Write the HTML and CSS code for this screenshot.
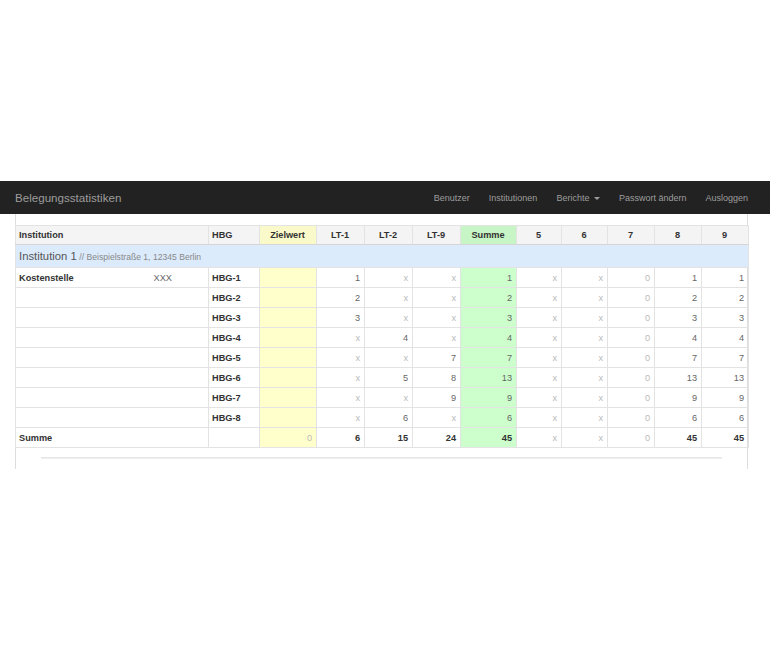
FILE: index.html
```html
<!DOCTYPE html>
<html>
	<head>
		<meta http-equiv="content-type" content="text/html; charset=utf-8" />
		<title>Belegungsstatistiken</title>
		<link rel="stylesheet" href="styles.css">
	</head>

	<body>
		<nav class="navbar">
			<a class="brand" href="#">Belegungsstatistiken</a>
			<ul class="nav">
				<li><a href="#">Benutzer</a></li>
				<li><a href="#">Institutionen</a></li>
				<li><a href="#">Berichte <span class="caret"></span></a></li>
				<li><a href="#">Passwort ändern</a></li>
				<li><a href="#">Ausloggen</a></li>
			</ul>
		</nav>

		<div class="container">
			<table class="stats">
				<colgroup>
					<col style="width:135px"><col style="width:58px"><col style="width:51px"><col style="width:57px">
					<col style="width:48px"><col style="width:48px"><col style="width:48px"><col style="width:56px">
					<col style="width:45px"><col style="width:46px"><col style="width:47px"><col style="width:47px"><col style="width:47px">
				</colgroup>
				<thead>
					<tr>
						<th colspan="2" class="left">Institution</th>
						<th class="left">HBG</th>
						<th class="target">Zielwert</th>
						<th>LT-1</th>
						<th>LT-2</th>
						<th>LT-9</th>
						<th class="sum">Summe</th>
						<th>5</th>
						<th>6</th>
						<th>7</th>
						<th>8</th>
						<th>9</th>
					</tr>
				</thead>
				<tbody>
					<tr class="inst">
						<td colspan="13"><span class="inst-name">Institution 1</span> <small>// Beispielstraße 1, 12345 Berlin</small></td>
					</tr>
					<tr>
						<td class="label no-rb">Kostenstelle</td><td class="code">XXX</td><td class="label">HBG-1</td><td class="target"></td>
						<td>1</td><td class="na">x</td><td class="na">x</td><td class="sum">1</td><td class="na">x</td><td class="na">x</td><td class="na">0</td><td>1</td><td>1</td>
					</tr>
					<tr>
						<td colspan="2"></td><td class="label">HBG-2</td><td class="target"></td>
						<td>2</td><td class="na">x</td><td class="na">x</td><td class="sum">2</td><td class="na">x</td><td class="na">x</td><td class="na">0</td><td>2</td><td>2</td>
					</tr>
					<tr>
						<td colspan="2"></td><td class="label">HBG-3</td><td class="target"></td>
						<td>3</td><td class="na">x</td><td class="na">x</td><td class="sum">3</td><td class="na">x</td><td class="na">x</td><td class="na">0</td><td>3</td><td>3</td>
					</tr>
					<tr>
						<td colspan="2"></td><td class="label">HBG-4</td><td class="target"></td>
						<td class="na">x</td><td>4</td><td class="na">x</td><td class="sum">4</td><td class="na">x</td><td class="na">x</td><td class="na">0</td><td>4</td><td>4</td>
					</tr>
					<tr>
						<td colspan="2"></td><td class="label">HBG-5</td><td class="target"></td>
						<td class="na">x</td><td class="na">x</td><td>7</td><td class="sum">7</td><td class="na">x</td><td class="na">x</td><td class="na">0</td><td>7</td><td>7</td>
					</tr>
					<tr>
						<td colspan="2"></td><td class="label">HBG-6</td><td class="target"></td>
						<td class="na">x</td><td>5</td><td>8</td><td class="sum">13</td><td class="na">x</td><td class="na">x</td><td class="na">0</td><td>13</td><td>13</td>
					</tr>
					<tr>
						<td colspan="2"></td><td class="label">HBG-7</td><td class="target"></td>
						<td class="na">x</td><td class="na">x</td><td>9</td><td class="sum">9</td><td class="na">x</td><td class="na">x</td><td class="na">0</td><td>9</td><td>9</td>
					</tr>
					<tr>
						<td colspan="2"></td><td class="label">HBG-8</td><td class="target"></td>
						<td class="na">x</td><td>6</td><td class="na">x</td><td class="sum">6</td><td class="na">x</td><td class="na">x</td><td class="na">0</td><td>6</td><td>6</td>
					</tr>
					<tr class="total">
						<td colspan="2" class="label">Summe</td><td></td><td class="target na">0</td>
						<td>6</td><td>15</td><td>24</td><td class="sum">45</td><td class="na">x</td><td class="na">x</td><td class="na">0</td><td>45</td><td>45</td>
					</tr>
				</tbody>
			</table>
			<hr class="divider">
		</div>
	</body>
</html>
```

FILE: styles.css
```css
body {
	margin: 0;
	padding-top: 181px;
	font-family: "Liberation Sans", Arial, sans-serif;
	font-size: 9.2px;
	color: #333;
	background: #fff;
}

.navbar {
	display: flex;
	align-items: center;
	justify-content: space-between;
	height: 33px;
	padding: 0 22px 0 15px;
	background: #222;
}

.brand {
	color: #9d9d9d;
	font-size: 11.6px;
	text-decoration: none;
}

.nav {
	display: flex;
	gap: 19px;
	margin: 0;
	padding: 0;
	list-style: none;
	font-size: 9px;
}

.nav a {
	color: #9d9d9d;
	text-decoration: none;
}

.caret {
	display: inline-block;
	width: 0;
	height: 0;
	margin-left: 2px;
	vertical-align: middle;
	border-top: 3px solid #9d9d9d;
	border-left: 3px solid transparent;
	border-right: 3px solid transparent;
}

.container {
	width: 733px;
	margin-left: 15px;
	padding: 11px 0 10px;
	box-sizing: border-box;
	border-left: 1px solid #ddd;
	border-right: 1px solid #ddd;
}

.stats {
	width: 733px;
	margin-left: -1px;
	border-collapse: collapse;
	table-layout: fixed;
}

.stats th,
.stats td {
	height: 19px;
	padding: 0 4px 0 3px;
	border: 1px solid #e3e3e3;
	text-align: right;
	color: #666;
	white-space: nowrap;
	overflow: hidden;
}

.stats th {
	height: 18px;
	background: #f4f4f4;
	text-align: center;
	font-weight: bold;
	color: #333;
	border-bottom: 1px solid #d6d6d6;
}

.stats .left {
	text-align: left;
}

.stats .target {
	background: #ffffcc;
}

.stats th.target {
	background: #f9f9c9;
}

.stats .sum {
	background: #ccffcc;
}

.stats th.sum {
	background: #c8f5c5;
}

.stats .na {
	color: #bbb;
	font-weight: normal;
}

.stats .label {
	text-align: left;
	font-weight: bold;
	color: #333;
}

.stats .code {
	text-align: left;
	color: #666;
	border-left: none;
}

.stats .no-rb {
	border-right: none;
}

.stats .inst td {
	height: 22px;
	text-align: left;
	background: #dcebfc;
}

.inst-name {
	font-size: 11.3px;
	color: #555;
}

.inst small {
	font-size: 8.6px;
	color: #888;
}

.stats .total td {
	font-weight: bold;
	color: #333;
}

.stats .total td.na {
	color: #bbb;
	font-weight: normal;
}

.divider {
	margin: 9px 25px 0;
	height: 0;
	border: none;
	border-top: 1px solid #e6e6e6;
	border-bottom: 1px solid #eee;
}
```
